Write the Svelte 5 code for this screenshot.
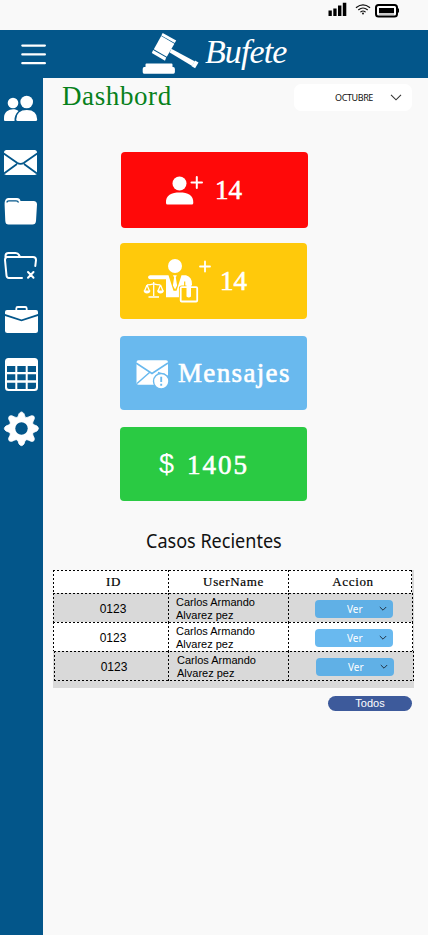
<script>
  const rows = [
    { id: '0123', name: 'Carlos Armando Alvarez pez' },
    { id: '0123', name: 'Carlos Armando Alvarez pez' },
    { id: '0123', name: 'Carlos Armando Alvarez pez' }
  ];
</script>

<div class="screen">
  <div class="status">
    <svg width="80" height="30" viewBox="324 0 80 30">
      <path d="M328.500 10.500h3.300V16h-3.300zM333.300 8.500h3.300V16h-3.300zM338 5.500h3.400V16H338zM342.800 2.800h3.500V16h-3.500z" fill="#000" />
      <g fill="none" stroke="#111" stroke-width="1.200" stroke-linecap="round">
        <path d="M356.300 7.500q6.700-5.200 13.400 0M358.600 9.700q4.400-3.400 8.800 0M360.900 11.800q2.100-1.600 4.200 0" />
      </g>
      <circle cx="363" cy="13.500" r=".9" />
      <rect x="376" y="5" width="21" height="11.500" rx="2.500" fill="#fff" stroke="#000" stroke-width="2" />
      <rect x="379" y="8" width="15" height="5" fill="#000" />
      <path d="M379 14h15" stroke="#999" />
      <path d="M398 8.500h1v4h-1z" fill="#000" />
    </svg>
  </div>

  <header>
    <svg class="menu" width="25" height="22" viewBox="0 0 25 22">
      <path d="M1.300 1.600h22.600M1.300 10.400h22.600M1.300 19.200h22.600" stroke="#fff" stroke-width="2.200" stroke-linecap="round" />
    </svg>
    <svg class="gavel" width="60" height="48" viewBox="140 30 60 48">
      <g fill="#fff">
        <path d="M145.500 64.500q0-1 1-1h25q1 0 1 1v2.500h.700q1.700 0 1.700 2v3q0 1.700-1.500 1.700H144q-1.300 0-1.300-1.700v-3q0-2 1.500-2h1.300z" />
        <path d="M162.700 32.900l13.500 7.600-1.500 2.600-13.400-7.700z" />
        <path d="M161.200 36.100l13.200 7.600-7.600 13-13-7.500z" />
        <path d="M153.100 49.900l13.100 7.600-1.200 3.200-13.200-7.800z" />
        <path d="M171.300 48.800l23.300 12.500-2.500 4.800-22.400-13.700z" />
        <path d="M195 60.500l3.500 2.100-3.400 5.700-3.500-2.100z" />
      </g>
    </svg>
    <span class="brand">Bufete</span>
  </header>

  <div class="body">
    <nav>
      <svg viewBox="0 82 43 54">
        <circle cx="13" cy="103" r="5.300" /><circle cx="26.700" cy="102" r="6.300" />
        <path d="M4 120v-2c0-8.500 10-10.500 14.500-7-3 3-4.300 6-4 10H5q-1 0-1-1z" />
        <path d="M16.200 119.500q.300-9.500 10.600-9.500t10.400 9.500q0 1.600-1.600 1.600H17.800q-1.600 0-1.600-1.600z" />
      </svg>
      <svg viewBox="0 136 43 54">
        <rect x="4" y="150" width="33" height="25" rx="2.500" />
        <path class="blue" d="M3 153l14 9.700q3.500 2.200 7 0L38 153M4 173.500l13-9.500M37 173.500L24 164" />
      </svg>
      <svg viewBox="0 190 43 54">
        <path d="M4.600 204.500q0-6.500 3.500-6.500H17q3 0 3.500 3h13q3.500 0 3.500 3.500l-1 16.500q-.300 3.500-3.500 3.500H8.500q-3 0-3.200-3.500z" />
        <path d="M7 202.500q0-1.700 2-1.700h7q2 0 2.500 1.700" stroke="#03568a" stroke-width="1.300" fill="none" />
      </svg>
      <svg viewBox="0 244 43 54">
        <g fill="none" stroke="#fff" stroke-width="2" stroke-linecap="round" stroke-linejoin="round">
          <path d="M22 278H9q-2.300 0-2.500-2.500L5 260q0-2.500 2-3h26q3 0 3 3l-.700 6M5.500 258v-2q0-3 3-3h7q2.500 0 3.500 2l1 2" />
          <path d="M28 272l5.500 5.800M33.500 272L28 277.800" />
        </g>
      </svg>
      <svg viewBox="0 298 43 54">
        <path d="M5 312q0-2 2-2h29q2 0 2 2v2l-16.500 5.500L5 314z" />
        <path d="M5 316l16.500 5.300L38 316v14.500q0 2.500-2.500 2.500h-28Q5 333 5 330.500z" />
        <path d="M16.300 310v-1.500q0-1.500 1.500-1.500h7.400q1.500 0 1.500 1.500v1.500" fill="none" stroke="#fff" stroke-width="1.800" />
      </svg>
      <svg viewBox="0 352 43 54">
        <path fill-rule="evenodd" d="M8.500 358h26q3.500 0 3.500 3.500v26q0 3.500-3.500 3.500h-26Q5 391 5 387.500v-26Q5 358 8.500 358zM7 366v6h8.300v-6zM17.300 366v6h8.400v-6zM27.700 366v6H36v-6zM7 374.300v6h8.300v-6zM17.300 374.300v6h8.400v-6zM27.700 374.300v6H36v-6zM7 382.700V387q0 2 2 2h6.300v-6.300zM17.300 382.700v6.300h8.400v-6.300zM27.700 382.700v6.300H34q2 0 2-2v-4.300z" />
      </svg>
      <svg viewBox="0 406 43 54">
        <path d="M19 413.700q2.500-3.500 5 0l1 3q.500 1.500 3 .500l3.200-1.400q4-.500 3 3.300l-1.400 3q-.600 1.900 1.200 2.700l3 1.200q3 2.200 0 5l-3 1.200q-1.800 1-1.200 2.800l1.400 3q.700 4-3.200 3.300l-3-1.400q-2-.700-3 1l-1 3q-2.500 3.500-5 0l-1-3q-1-1.700-3-1l-3 1.400q-4 .500-3.300-3.300l1.500-3q.500-2-1.200-2.800l-3-1.200q-3.300-2.500 0-5l3-1.200q1.700-.800 1.200-2.700l-1.500-3q-.500-4 3.300-3.300l3 1.400q2.200.800 3-.500z" stroke="#fff" stroke-width=".8" />
        <circle cx="21.500" cy="428.500" r="6.200" fill="#03568a" />
      </svg>
    </nav>

    <main>
      <div class="top">
        <h1>Dashbord</h1>
        <button class="month"><span>OCTUBRE</span>
          <svg width="12" height="7" viewBox="0 0 12 7"><path d="M1 .8l5 5 5-5" fill="none" stroke="#333" stroke-width="1.100" /></svg>
        </button>
      </div>

      <section class="cards">
        <div class="card red">
          <svg width="90" height="76" viewBox="121 152 90 76">
            <g fill="#fff">
              <circle cx="179.500" cy="183.500" r="7" />
              <path d="M166 203c-.500-8 5.500-10.500 13.700-10.500s14 2.500 13.600 10.500q0 1.500-1.500 1.500h-24.300q-1.500 0-1.500-1.500z" />
            </g>
            <path d="M191.500 182.500h10.500M196.800 177v11" stroke="#fff" stroke-width="2" stroke-linecap="round" />
          </svg>
          <span class="big n1">14</span>
        </div>
        <div class="card yellow">
          <svg width="95" height="76" viewBox="120 242.500 95 76">
            <circle cx="175" cy="265.500" r="7" fill="#fff" />
            <path d="M150 274.700h18.500l5 15.500h3l5-15.500h4.500q6 1.500 6 9v3h-5v10H166v-18h-16q-2-.500-2-2 0-1.700 2-2z" fill="#fff" />
            <path d="M173 274.700h3.800l-1 2.300 1.300 8-2 4-2.200-4 1.200-8z" fill="#fff" />
            <path d="M184.700 295v-14M191.300 287v9" fill="none" stroke="#ffc90b" stroke-width="1.200" />
            <rect x="180.700" y="286.700" width="16.500" height="14.300" rx="1" fill="#ffc90b" stroke="#ffc90b" stroke-width="3.500" />
            <rect x="180.700" y="286.700" width="16.500" height="14.300" rx="1" fill="none" stroke="#fff" stroke-width="1.800" />
            <path d="M186.500 281h4.500v15q-2.200 2-4.500 0z" fill="#fff" />
            <g fill="none" stroke="#fff" stroke-width="1.300">
              <path d="M153.700 281.500v14M147 284.300q3.500 0 6.700-1 3.200 1 6.700 1M148.500 296.500h10.500M147 284.500l-2.500 6M147 284.500l2.500 6M160.500 284.500l-2.500 6M160.500 284.500l2.500 6" />
            </g>
            <path d="M143.500 290h7q-.500 3-3.500 3t-3.500-3zM157 290h7q-.500 3-3.500 3t-3.500-3z" fill="#fff" />
            <path d="M200 266h10M205 261v10" stroke="#fff" stroke-width="1.800" stroke-linecap="round" />
          </svg>
          <span class="big n2">14</span>
        </div>
        <div class="card sky">
          <svg width="55" height="74" viewBox="120 335.500 55 74">
            <rect x="136.500" y="359.700" width="31.500" height="24.500" rx="2" fill="#fff" />
            <path d="M136 362.500l16 10.500 16-10.500M137 383l12.500-11M168 376l-10-4" fill="none" stroke="#69b9ee" stroke-width="1.500" />
            <circle cx="161.200" cy="380.700" r="7.700" fill="#fff" stroke="#69b9ee" stroke-width="1.400" />
            <path d="M161.200 376.300v5.300M161.200 383.300v2" stroke="#69b9ee" stroke-width="1.900" />
          </svg>
          <span class="big msg">Mensajes</span>
        </div>
        <div class="card green"><span class="dollar">$</span><span class="big total">1405</span></div>
      </section>

      <h2><span>Casos Recientes</span></h2>

      <div class="table">
        <div class="row head"><span>ID</span><span>UserName</span><span>Accion</span></div>
        {#each rows as row, i}
          <div class="row" class:white={i === 1} class:last={i === 2}>
            <span class="id">{row.id}</span>
            <span class="name">{row.name}</span>
            <button class="ver"><span>Ver</span>
              <svg width="8" height="6" viewBox="0 0 8 6"><path d="M.8 1l3.200 3.200L7.200 1" fill="none" stroke="#234" /></svg>
            </button>
          </div>
        {/each}
      </div>
      <button class="todos">Todos</button>
    </main>
  </div>
</div>

<style>
  :global(body) { margin: 0; }
  .screen { width: 428px; height: 935px; background: #f9f9f9; overflow: hidden; display: flex; flex-direction: column; font-family: "Liberation Sans", sans-serif; }
  .screen :is(svg) { display: block; flex: none; }
  button { border: 0; padding: 0; margin: 0; box-sizing: border-box; }
  .status { height: 30px; display: flex; justify-content: flex-end; padding-right: 24px; }
  header { height: 48px; background: #03568a; display: flex; flex: none; }
  .menu { margin: 14px 0 0 21px; }
  .gavel { margin-left: 94px; }
  .brand { margin-left: 5px; font: italic 34px/44px "Liberation Serif", serif; letter-spacing: -.9px; color: #fff; }
  .body { display: flex; flex: 1; }
  nav { width: 43px; background: #03568a; padding-top: 4px; box-sizing: border-box; }
  nav svg { width: 43px; height: 54px; fill: #fff; }
  .blue { fill: none; stroke: #03568a; stroke-width: 1.800; }
  main { width: 385px; }
  .top { height: 74px; display: flex; justify-content: space-between; }
  h1 { margin: 0 0 0 19px; font: 400 27px/37px "Liberation Serif", serif; letter-spacing: .6px; color: #07811b; }
  .month { width: 118px; height: 27px; margin: 6px 16px 0 0; background: #fff; border-radius: 7px; display: flex; align-items: center; padding: 0 10px 0 41px; justify-content: space-between; font: 9px "Noto Sans", sans-serif; letter-spacing: -.4px; color: #111; }
  .cards { padding-left: 77px; }
  .card { width: 187px; border-radius: 4px; display: flex; align-items: center; color: #fff; }
  .red { height: 76px; margin-left: 1px; background: #ff0909; }
  .yellow { height: 76px; margin-top: 14.500px; background: #ffc90b; }
  .sky { height: 74px; margin-top: 17px; background: #69b9ee; }
  .green { height: 74px; margin-top: 17.500px; background: #2aca43; }
  .big { font: 27px/32px "Liberation Serif", serif; -webkit-text-stroke: .6px #fff; }
  .n1 { margin-left: 4px; }
  .n2 { margin-left: 5px; }
  .msg { margin-left: 3px; letter-spacing: 1.350px; }
  .dollar { margin-left: 39px; font: 27px/32px "Liberation Sans", sans-serif; }
  .total { margin: 2px 0 0 13px; letter-spacing: 2px; }
  h2 { margin: 25.500px 0 0 103px; font: 400 19.500px/28px "Noto Sans", sans-serif; color: #111; height: 43px; }
  h2 span { display: inline-block; transform: scaleX(.925); transform-origin: left; white-space: nowrap; }
  .table { width: 361px; height: 118px; margin-left: 10px; background: #d9d9d9; }
  .row {
    --h: repeating-linear-gradient(90deg, #000 0 2px, transparent 2px 4px);
    --v: repeating-linear-gradient(#000 0 2px, transparent 2px 4px);
    width: 360px; height: 29px; box-sizing: border-box; display: grid; grid-template-columns: 116px 120px 1fr;
    background: var(--h) 0 0 / 100% 1px no-repeat, var(--v) 0 0 / 1px 100% no-repeat, var(--v) 115px 0 / 1px 100% no-repeat, var(--v) 235px 0 / 1px 100% no-repeat, var(--v) 100% 0 / 1px 100% no-repeat, #d9d9d9;
  }
  .head { width: 359px; height: 23px; font: 13px/24px "Liberation Serif", serif; letter-spacing: .65px; -webkit-text-stroke: .2px #000; text-align: center; background-color: #fff; }
  .head span:first-child { padding-left: 5px; }
  .head span:nth-child(2) { padding-left: 9px; }
  .head span:nth-child(3) { padding-left: 5px; }
  .white { background-color: #fff; }
  .last { margin-left: 1px; height: 30px; background: var(--h) 0 0 / 100% 1px no-repeat, var(--h) 0 100% / 100% 1px no-repeat, var(--v) 0 0 / 1px 100% no-repeat, var(--v) 114px 0 / 1px 100% no-repeat, var(--v) 234px 0 / 1px 100% no-repeat, var(--v) 100% 0 / 1px 100% no-repeat; }
  .id { text-align: center; padding-left: 4px; font-size: 12px; line-height: 33px; height: 29px; }
  .name { font-size: 11px; line-height: 13px; padding: 3px 20px 0 7px; }
  .ver { width: 78px; height: 18px; margin: 7px 0 0 26px; border-radius: 4px; background: #60b0e6; display: flex; align-items: center; justify-content: space-between; padding: 0 6px 0 32px; font: 10px "Noto Sans", sans-serif; color: #fff; }
  .white .ver { background: #69b9ef; }
  .todos { display: block; width: 84px; height: 15px; margin: 8px 0 0 285px; border-radius: 8px; background: #3d5a9b; color: #fff; font: 11px/15px "Liberation Sans", sans-serif; }
</style>
